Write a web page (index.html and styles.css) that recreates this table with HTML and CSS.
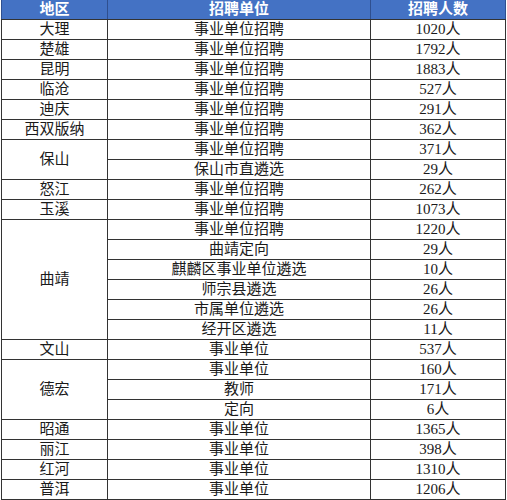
FILE: index.html
```html
<!DOCTYPE html>
<html lang="zh">
<head>
<meta charset="utf-8">
<link rel="stylesheet" href="styles.css">
</head>
<body>
<table class="sheet">
  <colgroup>
    <col class="c-region">
    <col class="c-unit">
    <col class="c-count">
  </colgroup>
  <thead>
    <tr><th>地区</th><th>招聘单位</th><th>招聘人数</th></tr>
  </thead>
  <tbody>
    <tr><td>大理</td><td>事业单位招聘</td><td>1020人</td></tr>
    <tr><td>楚雄</td><td>事业单位招聘</td><td>1792人</td></tr>
    <tr><td>昆明</td><td>事业单位招聘</td><td>1883人</td></tr>
    <tr><td>临沧</td><td>事业单位招聘</td><td>527人</td></tr>
    <tr><td>迪庆</td><td>事业单位招聘</td><td>291人</td></tr>
    <tr><td>西双版纳</td><td>事业单位招聘</td><td>362人</td></tr>
    <tr><td rowspan="2">保山</td><td>事业单位招聘</td><td>371人</td></tr>
    <tr><td>保山市直遴选</td><td>29人</td></tr>
    <tr><td>怒江</td><td>事业单位招聘</td><td>262人</td></tr>
    <tr><td>玉溪</td><td>事业单位招聘</td><td>1073人</td></tr>
    <tr><td rowspan="6">曲靖</td><td>事业单位招聘</td><td>1220人</td></tr>
    <tr><td>曲靖定向</td><td>29人</td></tr>
    <tr><td>麒麟区事业单位遴选</td><td>10人</td></tr>
    <tr><td>师宗县遴选</td><td>26人</td></tr>
    <tr><td>市属单位遴选</td><td>26人</td></tr>
    <tr><td>经开区遴选</td><td>11人</td></tr>
    <tr><td>文山</td><td>事业单位</td><td>537人</td></tr>
    <tr><td rowspan="3">德宏</td><td>事业单位</td><td>160人</td></tr>
    <tr><td>教师</td><td>171人</td></tr>
    <tr><td>定向</td><td>6人</td></tr>
    <tr><td>昭通</td><td>事业单位</td><td>1365人</td></tr>
    <tr><td>丽江</td><td>事业单位</td><td>398人</td></tr>
    <tr><td>红河</td><td>事业单位</td><td>1310人</td></tr>
    <tr><td>普洱</td><td>事业单位</td><td>1206人</td></tr>
  </tbody>
</table>
</body>
</html>
```

FILE: styles.css
```css
html, body {
  margin: 0;
  padding: 0;
  background: #ffffff;
}

body {
  font-family: "Liberation Serif", "Noto Sans CJK SC", serif;
  font-size: 15px;
  color: #1a1a1a;
}

.sheet {
  margin: 0 0 0 1px;
  border-collapse: collapse;
  table-layout: fixed;
  width: 504px;
}

.c-region { width: 106px; }
.c-unit { width: 263px; }
.c-count { width: 135px; }

.sheet th,
.sheet td {
  height: 19px;
  padding: 0;
  text-align: center;
  vertical-align: middle;
  line-height: 19px;
  border: 1px solid #333333;
  white-space: nowrap;
}

.sheet thead th {
  background: #4472c4;
  color: #ffffff;
  font-weight: bold;
  border-top: none;
  border-color: #2f4f8f;
  border-bottom-color: #333333;
}
```
